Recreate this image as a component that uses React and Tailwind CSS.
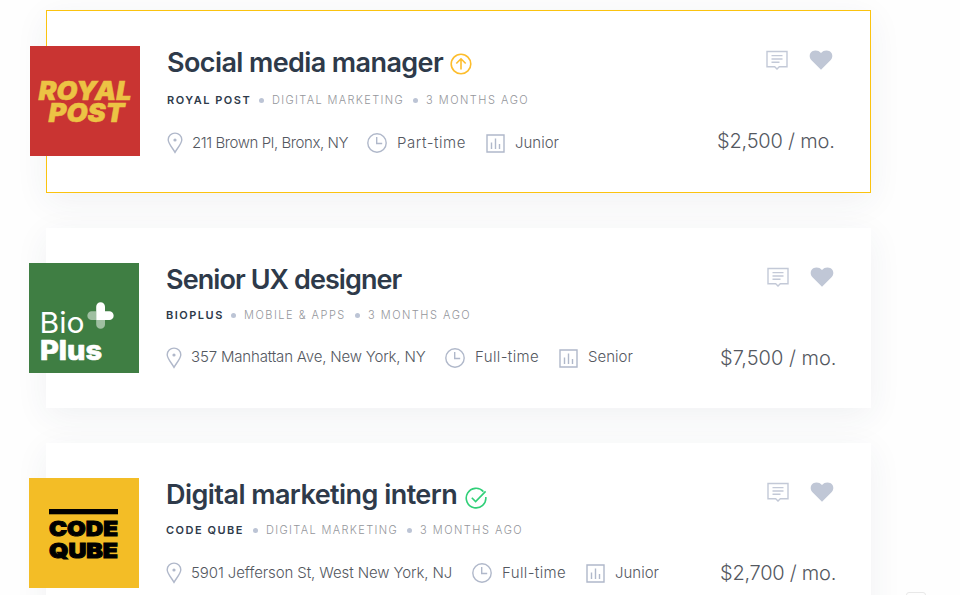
const jobs = [
  {
    title: 'Social media manager',
    titleClass: 'w-[277px] tracking-[-0.6px]',
    badge: 'featured',
    company: 'Royal Post',
    companyClass: 'w-[83px]',
    category: 'Digital marketing',
    categoryClass: 'w-[132px] tracking-[1.35px]',
    age: '3 months ago',
    location: '211 Brown Pl, Bronx, NY',
    locationClass: 'w-[156px] tracking-[-0.42px]',
    type: 'Part-time',
    typeClass: 'w-[70px] tracking-[0.55px]',
    level: 'Junior',
    salary: '$2,500 / mo.',
    salaryClass: 'w-[118px] tracking-[-0.2px]',
    Logo: RoyalPostLogo,
    cardClass: 'h-[183px] border border-[#fbc30f]',
    metaClass: 'mt-[14px]',
    detailsClass: 'mt-[22px]',
  },
  {
    title: 'Senior UX designer',
    titleClass: 'w-[236px] tracking-[-0.92px]',
    company: 'BioPlus',
    companyClass: 'w-[56px]',
    category: 'Mobile & Apps',
    categoryClass: 'w-[102px] tracking-[1.5px]',
    age: '3 months ago',
    location: '357 Manhattan Ave, New York, NY',
    locationClass: 'w-[235px] mb-[2px] tracking-[-0.17px]',
    type: 'Full-time',
    typeClass: 'w-[65px] mb-[2px] tracking-[0.37px]',
    level: 'Senior',
    levelClass: 'mb-[2px]',
    salary: '$7,500 / mo.',
    salaryClass: 'w-[116px]',
    Logo: BioPlusLogo,
    cardClass: 'h-[180px]',
    metaClass: 'mt-[12px]',
    detailsClass: 'mt-[22px]',
  },
  {
    title: 'Digital marketing intern',
    titleClass: 'w-[292px] tracking-[-0.55px]',
    badge: 'verified',
    company: 'Code Qube',
    companyClass: 'w-[78px]',
    category: 'Digital marketing',
    categoryClass: 'w-[132px] tracking-[1.35px]',
    age: '3 months ago',
    location: '5901 Jefferson St, West New York, NJ',
    locationClass: 'w-[262px] tracking-[-0.1px]',
    type: 'Full-time',
    typeClass: 'w-[65px] tracking-[0.37px]',
    level: 'Junior',
    salary: '$2,700 / mo.',
    salaryClass: 'w-[116px] tracking-[-0.25px]',
    Logo: CodeQubeLogo,
    cardClass: 'h-[180px]',
    metaClass: 'mt-[12px]',
    detailsClass: 'mt-[22px]',
  },
];

function RoyalPostLogo() {
  return (
    <svg className="size-[110px] shrink-0 font-['Inter',sans-serif]" viewBox="0 0 110 110">
      <rect width="110" height="110" fill="#c93432" />
      <g fill="#ecc344" stroke="#ecc344" strokeWidth=".5" fontSize="25.5" fontWeight="900" fontStyle="italic">
        <text x="8.5" y="54" textLength="93" lengthAdjust="spacingAndGlyphs">ROYAL</text>
        <text x="18.5" y="76" textLength="76" lengthAdjust="spacingAndGlyphs">POST</text>
      </g>
    </svg>
  );
}

function BioPlusLogo() {
  return (
    <svg className="size-[110px] shrink-0 font-['Inter',sans-serif]" viewBox="0 0 110 110">
      <rect width="110" height="110" fill="#3f7e43" />
      <g fill="#fff">
        <path d="M62.7 48.3H67V57h-4.3a4.35 4.35 0 0 1 0-8.7ZM67.2 57H76v4.4a4.4 4.4 0 0 1-8.8 0Z" opacity=".5" />
        <path d="M67.2 57V43.7a4.4 4.4 0 0 1 8.8 0v4.6h4.3a4.35 4.35 0 0 1 0 8.7Z" />
        <text x="10.5" y="70" fontSize="29" fontWeight="400" textLength="45" lengthAdjust="spacingAndGlyphs">Bio</text>
        <text x="11" y="97.3" fontSize="27.5" fontWeight="800" stroke="#fff" strokeWidth=".7" strokeLinejoin="round" textLength="62" lengthAdjust="spacingAndGlyphs">Plus</text>
      </g>
    </svg>
  );
}

function CodeQubeLogo() {
  return (
    <svg className="size-[110px] shrink-0 font-['Inter',sans-serif]" viewBox="0 0 110 110">
      <rect width="110" height="110" fill="#f3bd26" />
      <rect x="20" y="31" width="69" height="5.3" />
      <g fontSize="20.8" fontWeight="900" stroke="#000" strokeWidth="1">
        <text x="20" y="58.2" textLength="69" lengthAdjust="spacingAndGlyphs">CODE</text>
        <text x="20" y="80.2" textLength="69" lengthAdjust="spacingAndGlyphs">QUBE</text>
      </g>
    </svg>
  );
}

function Badge({ kind }) {
  if (kind === 'featured') {
    return (
      <svg className="mt-[2px] ml-[6px] size-[22px]" viewBox="0 0 22 22" fill="none" stroke="#fdbd2c" strokeWidth="1.6">
        <circle cx="11" cy="11" r="9.8" />
        <path d="M11 16.5V6M6.3 10.5 11 5.8l4.7 4.7" />
      </svg>
    );
  }
  return (
    <svg className="mt-[5px] ml-[7px] size-[22px]" viewBox="0 0 22 22" fill="none" stroke="#30cf78" strokeWidth="1.6">
      <path d="M18.4 4.6A9.8 9.8 0 1 0 20.8 10" />
      <path d="m6.8 10.8 3.8 3.8L20.6 4.4" />
    </svg>
  );
}

const PinIcon = () => (
  <svg className="w-[16px] h-[22px]" viewBox="0 0 16 22" fill="none" stroke="#b0b8ca" strokeWidth="1.4">
    <path d="M8 20.3C6 16.5 1.2 11.6 1.2 7.7a6.8 6.6 0 0 1 13.6 0C14.8 11.6 10 16.5 8 20.3Z" />
    <circle cx="8" cy="8" r="1.6" fill="#b0b8ca" stroke="none" />
  </svg>
);

const ClockIcon = () => (
  <svg className="size-[20px]" viewBox="0 0 20 20" fill="none" stroke="#b0b8ca" strokeWidth="1.4">
    <circle cx="10" cy="10" r="9.2" />
    <path d="M9.7 4v6.5h5.5" />
  </svg>
);

const LevelIcon = () => (
  <svg className="size-[19px]" viewBox="0 0 19 19" fill="none" stroke="#b0b8ca" strokeWidth="1.4">
    <path d="M1 1h17v17H1ZM5.5 8.5V15M9.5 4.5V15M13.5 10v5" />
  </svg>
);

const CommentIcon = () => (
  <svg className="w-[22px] h-[20px]" viewBox="0 0 22 20" fill="none" stroke="#c3c9d7" strokeWidth="1.4">
    <path d="M1 1.5h20v15.3h-7.7L11 19l-2.3-2.2H1Z" />
    <path d="M5.5 5.6h11M5.5 9h11M5.5 12.3h8" />
  </svg>
);

const HeartIcon = () => (
  <svg className="w-[24px] h-[20px]" viewBox="0 0 24 20" fill="#c0c7d6">
    <path d="M12 19.8 2.5 10.3C-.3 7.2.3 3.2 3.2 1.3 6-.3 9.7.2 12 2.9 14.3.2 18-.3 20.8 1.3c2.9 1.9 3.5 5.9.7 9Z" />
  </svg>
);

const Dot = () => <span className="mr-[8px] ml-[9px] size-[5px] rounded-full bg-[#bcc4d5]" />;

function JobCard({ job }) {
  return (
    <article
      className={`flex w-[825px] bg-white pt-[35px] pr-[35px] shadow-[0_8px_32px_rgba(45,60,90,0.065)] ${job.cardClass}`}
    >
      <div className="-ml-[17px] mr-[27px]">
        <job.Logo />
      </div>
      <div className="flex-1 whitespace-nowrap">
        <div className="flex h-[34px] items-center">
          <h2 className={`text-[27px] font-semibold text-[#2e3a4a] ${job.titleClass}`}>{job.title}</h2>
          {job.badge && <Badge kind={job.badge} />}
        </div>
        <div className={`flex h-[12px] items-center text-[11px] uppercase text-[#94969b] ${job.metaClass}`}>
          <span className={`font-semibold text-[#2e3a4a] tracking-[1.5px] ${job.companyClass}`}>{job.company}</span>
          <Dot />
          <span className={`font-light ${job.categoryClass}`}>{job.category}</span>
          <Dot />
          <span className="font-light tracking-[1.5px]">{job.age}</span>
        </div>
        <div className={`flex h-[30px] items-center text-[15px] font-light text-[#54585f] ${job.detailsClass}`}>
          <PinIcon />
          <span className={`ml-[9px] mr-[19px] ${job.locationClass}`}>{job.location}</span>
          <ClockIcon />
          <span className={`ml-[10px] mr-[19px] ${job.typeClass}`}>{job.type}</span>
          <LevelIcon />
          <span className={`ml-[10px] ${job.levelClass ?? ''}`}>{job.level}</span>
        </div>
      </div>
      <div className="flex flex-col items-end whitespace-nowrap">
        <div className="mt-[4px] mr-[2px] flex gap-[21px]">
          <CommentIcon />
          <HeartIcon />
        </div>
        <p className={`mt-[56px] text-[20px] leading-[30px] font-light text-[#54585f] ${job.salaryClass}`}>{job.salary}</p>
      </div>
    </article>
  );
}

export default function App() {
  return (
    <main className="relative flex h-[595px] flex-col gap-[35px] overflow-hidden bg-[#fefefe] pt-[10px] pl-[46px] font-['Inter',sans-serif]">
      {jobs.map((job) => (
        <div key={job.title} className="shrink-0">
          <JobCard job={job} />
        </div>
      ))}
      <span className="absolute top-[592px] left-[906px] h-[20px] w-[20px] rounded-[3px] border border-[#e8e8e8]" />
    </main>
  );
}
